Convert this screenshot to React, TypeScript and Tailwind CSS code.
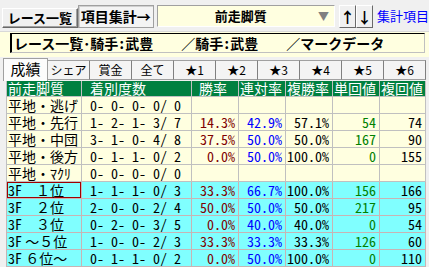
import React from 'react';

type Row = { label: string; rec: string; win: string; ren: string; fuku: string; tan: string; fk: string };

const rows: Row[] = [
  { label: '平地・逃げ', rec: '0- 0- 0- 0/ 0', win: '', ren: '', fuku: '', tan: '', fk: '' },
  { label: '平地・先行', rec: '1- 2- 1- 3/ 7', win: '14.3%', ren: '42.9%', fuku: '57.1%', tan: '54', fk: '74' },
  { label: '平地・中団', rec: '3- 1- 0- 4/ 8', win: '37.5%', ren: '50.0%', fuku: '50.0%', tan: '167', fk: '90' },
  { label: '平地・後方', rec: '0- 1- 1- 0/ 2', win: '0.0%', ren: '50.0%', fuku: '100.0%', tan: '0', fk: '155' },
  { label: '平地・ﾏｸﾘ', rec: '0- 0- 0- 0/ 0', win: '', ren: '', fuku: '', tan: '', fk: '' },
  { label: '3F　１位', rec: '1- 1- 1- 0/ 3', win: '33.3%', ren: '66.7%', fuku: '100.0%', tan: '156', fk: '166' },
  { label: '3F　２位', rec: '2- 0- 0- 2/ 4', win: '50.0%', ren: '50.0%', fuku: '50.0%', tan: '217', fk: '95' },
  { label: '3F　３位', rec: '0- 2- 0- 3/ 5', win: '0.0%', ren: '40.0%', fuku: '40.0%', tan: '0', fk: '54' },
  { label: '3F ～５位', rec: '1- 0- 0- 2/ 3', win: '33.3%', ren: '33.3%', fuku: '33.3%', tan: '126', fk: '60' },
  { label: '3F ６位～', rec: '0- 1- 1- 0/ 2', win: '0.0%', ren: '50.0%', fuku: '100.0%', tan: '0', fk: '110' },
];

const tabs = ['シェア', '賞金', '全て', '★1', '★2', '★3', '★4', '★5', '★6'];

const cols = 'grid grid-cols-[75px_110px_47px_47px_47px_47px_46px]';
const half = "[font-feature-settings:'hwid']";

function DataRow({ r, i }: { r: Row; i: number }) {
  const cyan = i >= 5;
  const line = cyan ? 'border-[#c8b4b4]' : 'border-[#c0c0c0]';
  const cell = `border-r border-b ${line} h-[17px] leading-[16px] whitespace-pre overflow-hidden`;
  const num = `${cell} ${half} text-right pr-[3px]`;
  const label = r.label.startsWith('3F') ? (
    <>
      <span className={half}>3F</span>
      {r.label.slice(2)}
    </>
  ) : (
    r.label
  );
  return (
    <div className={`${cols} border-l ${line} ${cyan ? 'bg-[#80ffff]' : 'bg-[#ffffe0]'}`}>
      <div className={`${cell} ${i === 5 ? 'p-0' : 'pl-[1px]'}`}>
        {i === 5 ? <div className="h-[16px] border border-[#a00000] leading-[14px]">{label}</div> : label}
      </div>
      <div className={`${cell} ${half} pl-[8px]`}>{r.rec}</div>
      <div className={`${num} text-[#800000]`}>{r.win}</div>
      <div className={`${num} text-[#0000ff]`}>{r.ren}</div>
      <div className={num}>{r.fuku}</div>
      <div className={`${num} text-[#008000]`}>{r.tan}</div>
      <div className={num}>{r.fk}</div>
    </div>
  );
}

export default function App() {
  return (
    <div className="w-[429px] h-[267px] overflow-hidden bg-[#f0f0f0] text-black text-[14px] font-['Noto_Sans_CJK_JP',sans-serif] flex flex-col">
      {/* toolbar */}
      <div className="h-[31px] flex items-start shrink-0">
        <button className="ml-[2px] mt-[8px] w-[79px] h-[20px] bg-[#f0f0f0] border border-t-white border-l-white border-r-[#696969] border-b-[#696969] shadow-[inset_-1px_-1px_0_#a0a0a0] font-bold text-[13px] leading-[18px]">
          レース一覧
        </button>
        <button className="mt-[5px] w-[79px] h-[23px] bg-[#f4f4f4] border border-[#a0a0a0] shadow-[inset_1px_1px_0_#d0d0d0] font-bold text-[14px] leading-[21px]">
          項目集計→
        </button>
        <div className="ml-[3px] mt-[5px] w-[186px] h-[22px] bg-[#ffffe0] border border-t-[#a0a0a0] border-l-[#a0a0a0] border-r-white border-b-white flex items-center">
          <span className="flex-1 text-center font-bold text-[13px] pl-[6px]">前走脚質</span>
          <span className="w-[16px] text-[11px] text-[#808080] leading-none">▼</span>
        </div>
        <button className="ml-[4px] mt-[5px] w-[17px] h-[23px] bg-[#f0f0f0] border border-t-white border-l-white border-r-[#696969] border-b-[#696969] font-bold text-[15px] leading-[20px]">
          ↑
        </button>
        <button className="w-[17px] mt-[5px] h-[23px] bg-[#f0f0f0] border border-t-white border-l-white border-r-[#696969] border-b-[#696969] font-bold text-[15px] leading-[20px]">
          ↓
        </button>
        <span className="ml-[4px] mt-[8px] text-[13px] leading-[16px] text-[#0000ff] whitespace-nowrap">集計項目</span>
      </div>

      {/* title */}
      <div className="h-[26px] shrink-0 bg-[#ffffe0] border-t border-[#d8d8d8] pt-[1px]">
        <div className="ml-[10px] w-[415px] h-[20px] border-l-2 border-t border-black border-b border-r border-b-[#c0c0c0] border-r-[#c0c0c0] pl-[2px] font-bold text-[14px] leading-[18px] whitespace-pre">
          レース一覧･騎手<span className={half}>:</span>武豊　　／騎手<span className={half}>:</span>武豊　　／マークデータ
        </div>
      </div>

      {/* tabs */}
      <div className="h-[24px] shrink-0 flex items-end">
        <div className="ml-[3px] w-[45px] h-[23px] bg-[#fcfcfc] border border-b-0 border-[#a0a0a0] text-center text-[15px] leading-[20px]">成績</div>
        {tabs.map((t) => (
          <div key={t} className="w-[42px] h-[20px] mb-[1px] bg-[#f4f4f4] border border-l-0 border-[#a0a0a0] border-r-[#808080] text-center text-[12px] leading-[18px] whitespace-nowrap">
            {t}
          </div>
        ))}
      </div>

      {/* table */}
      <div className="ml-[6px] w-[420px]">
        <div className={`${cols} border-l border-[#c0c0c0] bg-[#008040] text-white`}>
          {['前走脚質', '着別度数', '勝率', '連対率', '複勝率', '単回値', '複回値'].map((h, i) => (
            <div key={h} className={`h-[16px] leading-[15px] border-r border-b border-[#c0c0c0] whitespace-nowrap overflow-hidden ${i === 0 ? 'pl-[1px]' : i === 1 ? 'pl-[8px]' : i === 2 ? 'pl-[7px]' : 'pl-[1px]'}`}>
              {h}
            </div>
          ))}
        </div>
        {rows.map((r, i) => (
          <DataRow key={i} r={r} i={i} />
        ))}
      </div>
    </div>
  );
}
